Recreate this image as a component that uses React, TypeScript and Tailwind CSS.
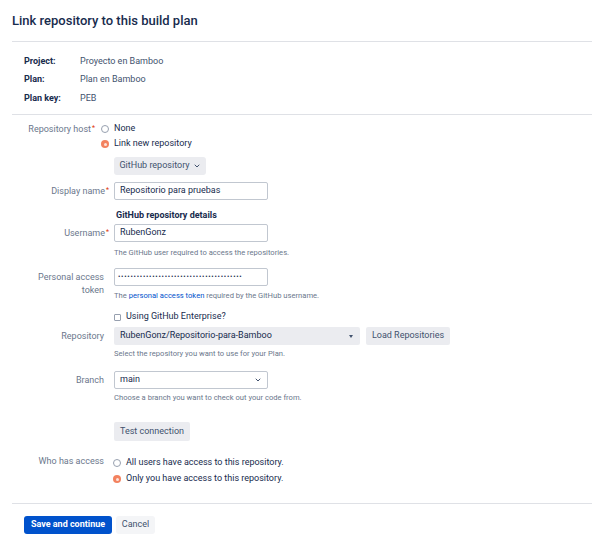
import React from "react";
import { ChevronDown } from "lucide-react";

const Req = () => <span className="text-[#de350b] text-[7px] align-top relative top-[-1px] ml-[1px] -mr-[5px]">*</span>;

const Radio = ({ checked }: { checked?: boolean }) =>
  checked ? (
    <span className="w-[8px] h-[8px] rounded-full bg-[#f3825f] flex items-center justify-center">
      <span className="w-[3px] h-[3px] rounded-full bg-[#fde3da]" />
    </span>
  ) : (
    <span className="w-[8px] h-[8px] rounded-full border border-[#97a0af] bg-white" />
  );

const Label = ({ children, req }: { children: React.ReactNode; req?: boolean }) => (
  <div className="w-[104px] shrink-0 text-right text-[#6b778c] leading-[13px]">
    {children}
    {req && <Req />}
  </div>
);

const Help = ({ children }: { children: React.ReactNode }) => (
  <div className="ml-[114px] text-[7.6px] leading-[12px] text-[#6b778c]">{children}</div>
);

const App = () => {
  return (
    <div className="w-[602px] h-[548px] bg-white font-['Roboto',sans-serif] text-[9px] text-[#172b4d]">
      <div className="mx-3 w-[580px] h-[42px] flex items-center border-b border-[#dfe1e6]">
        <h1 className="text-[13px] font-medium text-[#172b4d] leading-[18px]">Link repository to this build plan</h1>
      </div>

      <div className="mx-3 w-[580px] pl-3 pt-[10px] pb-[6px] border-b border-[#dfe1e6]">
        {[
          ["Project:", "Proyecto en Bamboo"],
          ["Plan:", "Plan en Bamboo"],
          ["Plan key:", "PEB"],
        ].map(([k, v]) => (
          <div key={k} className="flex h-[18.5px] items-center">
            <span className="w-[56px] font-bold text-[#172b4d]">{k}</span>
            <span className="text-[#42526e]">{v}</span>
          </div>
        ))}
      </div>

      <div className="pt-[7px]">
        <div className="flex">
          <div className="w-[90px] text-right text-[#6b778c] leading-[15px]">
            Repository host
            <Req />
          </div>
          <div className="ml-[11px] flex flex-col">
            <div className="flex items-center h-[15px] gap-[5px]">
              <Radio />
              <span>None</span>
            </div>
            <div className="flex items-center h-[15px] gap-[5px]">
              <Radio checked />
              <span>Link new repository</span>
            </div>
          </div>
        </div>

        <div className="ml-[114px] mt-[5.5px] w-[92px] h-[18px] rounded-[3px] bg-[#ebecf0] text-[#42526e] flex items-center justify-center gap-[3px]">
          GitHub repository <ChevronDown size={8} strokeWidth={3} />
        </div>

        <div className="flex items-center mt-[7px] gap-[10px]">
          <Label req>Display name</Label>
          <div className="w-[154px] h-[18px] border border-[#c1c7d0] rounded-[2px] px-[5px] flex items-center">Repositorio para pruebas</div>
        </div>

        <div className="ml-[116px] mt-[8px] leading-[14px] font-bold">GitHub repository details</div>

        <div className="flex items-center mt-[2px] gap-[10px]">
          <Label req>Username</Label>
          <div className="w-[154px] h-[18px] border border-[#c1c7d0] rounded-[2px] px-[5px] flex items-center">RubenGonz</div>
        </div>
        <div className="mt-[5px]">
          <Help>The GitHub user required to access the repositories.</Help>
        </div>

        <div className="flex items-start mt-[9px] gap-[10px]">
          <div className="w-[104px] shrink-0 text-right text-[#6b778c] leading-[13px] pt-[2.5px]">
            Personal access
            <br />
            token
          </div>
          <div className="flex flex-col">
            <div className="w-[154px] h-[18px] border border-[#c1c7d0] rounded-[2px] px-[3px] flex items-center text-[7px] tracking-[0.75px] overflow-hidden whitespace-nowrap">
              {"•".repeat(40)}
            </div>
            <div className="mt-[4px] text-[7.6px] leading-[12px] text-[#6b778c]">
              The <span className="text-[#0052cc]">personal access token</span> required by the GitHub username.
            </div>
          </div>
        </div>

        <div className="ml-[114px] mt-[8px] h-[14px] flex items-center gap-[5px]">
          <span className="w-[7px] h-[7px] border border-[#97a0af] rounded-[1px] bg-white" />
          <span>Using GitHub Enterprise?</span>
        </div>

        <div className="flex items-center mt-[3px] gap-[10px]">
          <Label>Repository</Label>
          <div className="w-[246px] h-[18px] rounded-[2px] bg-[#ebecf0] px-[6px] flex items-center justify-between">
            <span>RubenGonz/Repositorio-para-Bamboo</span>
            <span className="w-0 h-0 border-l-[2.5px] border-r-[2.5px] border-t-[3px] border-l-transparent border-r-transparent border-t-[#42526e] mr-[1px]" />
          </div>
          <div className="ml-[-4px] w-[84px] h-[18px] rounded-[2px] bg-[#ebecf0] text-[#42526e] flex items-center justify-center">
            Load Repositories
          </div>
        </div>
        <div className="mt-[3px]">
          <Help>Select the repository you want to use for your Plan.</Help>
        </div>

        <div className="flex items-center mt-[11px] gap-[10px]">
          <Label>Branch</Label>
          <div className="w-[154px] h-[18px] border border-[#c1c7d0] rounded-[2px] px-[5px] flex items-center justify-between">
            <span>main</span>
            <ChevronDown size={8} strokeWidth={3} className="text-[#42526e]" />
          </div>
        </div>
        <div className="mt-[3px]">
          <Help>Choose a branch you want to check out your code from.</Help>
        </div>

        <div className="ml-[114px] mt-[18px] w-[76px] h-[19px] rounded-[2px] bg-[#ebecf0] text-[#42526e] flex items-center justify-center">
          Test connection
        </div>

        <div className="flex items-start mt-[14px] gap-[9px]">
          <div className="w-[104px] shrink-0 text-right text-[#6b778c] leading-[13px]">Who has access</div>
          <div className="flex flex-col">
            <div className="flex items-center h-[16px] gap-[5px]">
              <Radio />
              <span>All users have access to this repository.</span>
            </div>
            <div className="flex items-center h-[16px] gap-[5px]">
              <Radio checked />
              <span>Only you have access to this repository.</span>
            </div>
          </div>
        </div>

        <div className="mx-3 w-[580px] mt-[16px] border-t border-[#dfe1e6]" />

        <div className="ml-6 mt-[12px] flex gap-[4px]">
          <div className="w-[88px] h-[18px] rounded-[3px] bg-[#0052cc] text-white font-bold flex items-center justify-center">
            Save and continue
          </div>
          <div className="w-[39px] h-[18px] rounded-[3px] bg-[#f4f5f7] text-[#42526e] flex items-center justify-center">
            Cancel
          </div>
        </div>
      </div>
    </div>
  );
};

export default App;
